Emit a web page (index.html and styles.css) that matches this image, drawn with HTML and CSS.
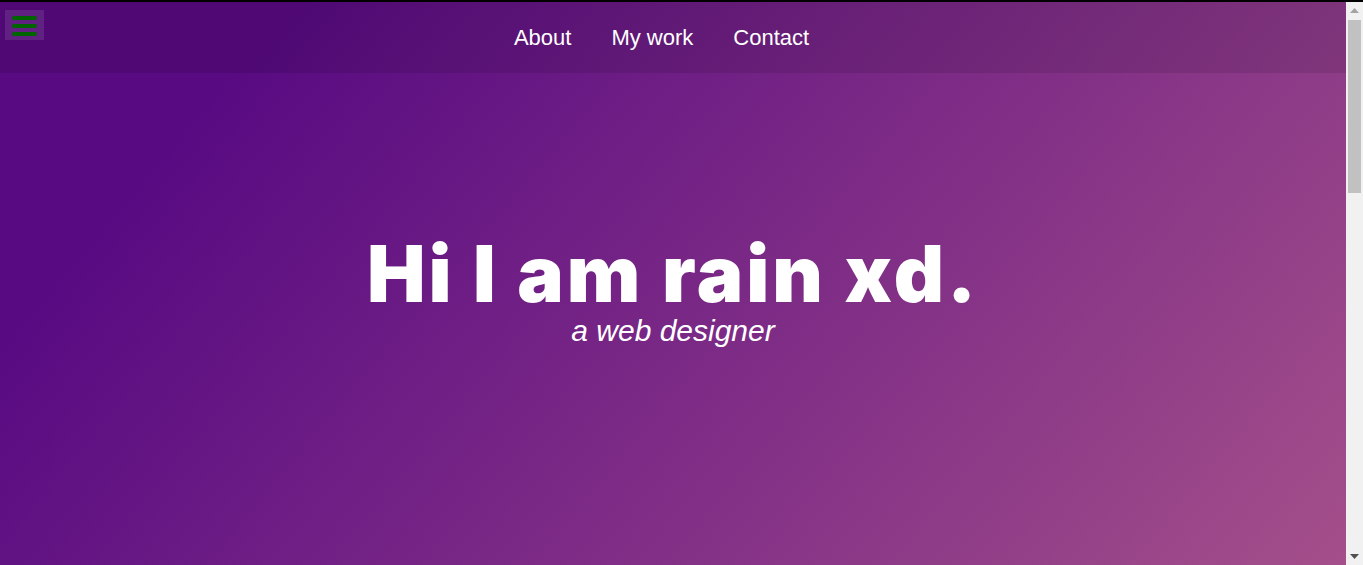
FILE: index.html
```html
<!DOCTYPE html>
<html lang="en">
<head>
<meta charset="utf-8">
<title>rain xd</title>
<link rel="stylesheet" href="styles.css">
</head>
<body>
<div class="window">
  <div class="page">
    <div class="top">
      <header class="header">
        <button class="menu-btn" aria-label="Menu">
          <span class="bar"></span>
          <span class="bar"></span>
          <span class="bar"></span>
        </button>
        <nav class="nav">
          <a href="#about" class="nav-link">About</a>
          <a href="#work" class="nav-link">My work</a>
          <a href="#contact" class="nav-link">Contact</a>
        </nav>
        <div class="spacer"></div>
      </header>
      <section class="hero">
        <h1 class="hero-title">Hi I am rain xd.</h1>
        <p class="hero-sub">a web designer</p>
      </section>
    </div>
    <section class="below" id="about"></section>
  </div>
  <div class="scrollbar" aria-hidden="true">
    <div class="sb-btn">
      <svg width="9" height="5" viewBox="0 0 9 5"><polygon points="0,5 4.5,0 9,5" fill="#a3a3a3"/></svg>
    </div>
    <div class="sb-track">
      <div class="sb-thumb"></div>
    </div>
    <div class="sb-btn">
      <svg width="9" height="5" viewBox="0 0 9 5"><polygon points="0,0 9,0 4.5,5" fill="#505050"/></svg>
    </div>
  </div>
</div>
</body>
</html>
```

FILE: styles.css
```css
html, body {
  margin: 0;
  padding: 0;
  height: 100%;
  overflow: hidden;
}
body {
  font-family: "Liberation Sans", Arial, sans-serif;
  background: #ffffff;
  border-top: 2px solid #000;
  box-sizing: border-box;
}
.window {
  display: flex;
  height: 100%;
}
.page {
  flex: 1;
  min-width: 0;
  overflow: hidden;
}
.scrollbar {
  width: 17px;
  flex: none;
  background: #f1f1f1;
  display: flex;
  flex-direction: column;
}
.sb-btn {
  height: 17px;
  display: flex;
  align-items: center;
  justify-content: center;
  flex: none;
}
.sb-btn svg {
  display: block;
}
.sb-track {
  flex: 1;
  padding: 1px 2px 0;
}
.sb-thumb {
  height: 173px;
  background: #c1c1c1;
}
.top {
  background: linear-gradient(130deg, #580a82 16%, #a44f8a 100%);
}
.header {
  height: 71px;
  display: grid;
  grid-template-columns: 1fr auto 1fr;
  align-items: center;
  background: rgba(0, 0, 0, 0.1);
}
.menu-btn {
  align-self: start;
  justify-self: start;
  margin: 8px 0 0 5px;
  width: 39px;
  height: 30px;
  padding: 6px 0 0 7px;
  border: 0;
  background: rgba(255, 255, 255, 0.1);
  display: flex;
  flex-direction: column;
  gap: 4px;
  box-sizing: border-box;
  cursor: pointer;
}
.bar {
  display: block;
  width: 25px;
  height: 4px;
  border-radius: 2px;
  background: #006400;
}
.nav {
  display: flex;
  gap: 40px;
  padding-right: 23px;
  padding-top: 1px;
}
.nav-link {
  color: #ffffff;
  text-decoration: none;
  font-size: 22px;
  line-height: normal;
}
.hero {
  height: 492px;
  box-sizing: border-box;
  padding-top: 162px;
  display: flex;
  flex-direction: column;
  align-items: center;
  color: #ffffff;
}
.hero-title {
  margin: 0;
  font-family: Inter, "Open Sans", sans-serif;
  font-weight: 900;
  font-size: 78px;
  line-height: 78px;
  letter-spacing: 3px;
}
.hero-sub {
  margin: 3px 0 0;
  font-family: "Liberation Sans", Arial, sans-serif;
  font-style: italic;
  font-size: 30px;
  line-height: 30px;
}
.below {
  height: 1169px;
  background: #ffffff;
}
```
